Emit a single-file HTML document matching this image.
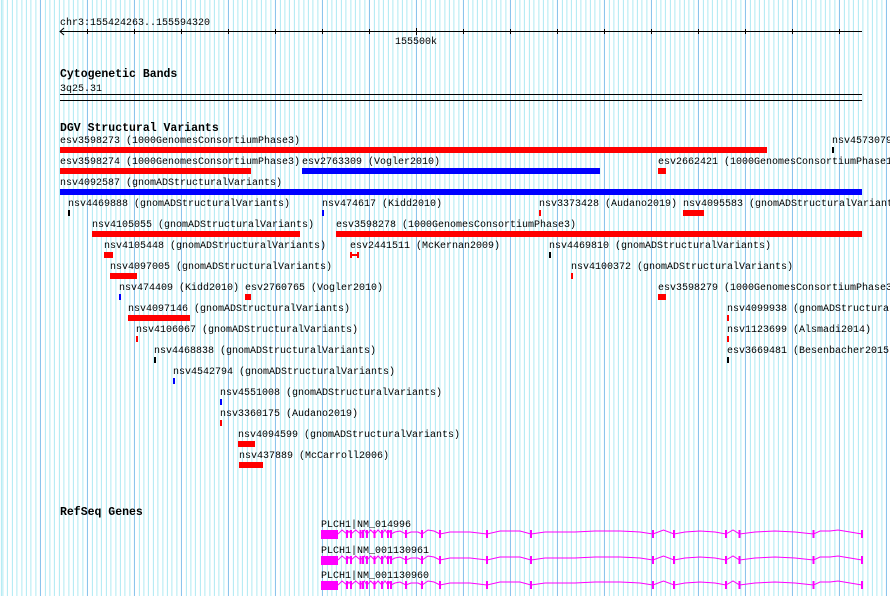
<!DOCTYPE html>
<html><head><meta charset="utf-8"><style>
html,body{margin:0;padding:0}
#p{position:relative;width:890px;height:596px;overflow:hidden;background-color:#fff;
background-image:repeating-linear-gradient(90deg,#8cc4ec 0,#8cc4ec 1px,transparent 1px,transparent 47px),repeating-linear-gradient(90deg,#aeeaf2 0,#aeeaf2 1px,transparent 1px,transparent 4.7px);
background-position:40px 0,2.4px 0;}
.t{position:absolute;font:10px/11px "Liberation Mono",monospace;color:#000;white-space:nowrap;transform:translateY(2px)}
.h{position:absolute;font:bold 11.5px/12px "Liberation Mono",monospace;color:#000;white-space:nowrap;transform:translateY(2px)}
.r{position:absolute;background:#f00;height:6px}
.b{position:absolute;background:#00f;height:6px}
.k{position:absolute;background:#000;height:6px;width:2px}
svg{position:absolute;left:0;top:0}
</style></head><body><div id="p">
<svg width="890" height="596">
<line x1="60" y1="31.5" x2="862" y2="31.5" stroke="#000"/>
<polyline points="64,28 60,31.5 64,35" fill="none" stroke="#000"/>
<g stroke="#000">
<line x1="87.5" y1="29" x2="87.5" y2="34"/><line x1="134.5" y1="29" x2="134.5" y2="34"/><line x1="181.5" y1="29" x2="181.5" y2="34"/><line x1="228.5" y1="29" x2="228.5" y2="34"/><line x1="275.5" y1="29" x2="275.5" y2="34"/><line x1="322.5" y1="29" x2="322.5" y2="34"/><line x1="369.5" y1="29" x2="369.5" y2="34"/><line x1="416.5" y1="28" x2="416.5" y2="35"/><line x1="463.5" y1="29" x2="463.5" y2="34"/><line x1="510.5" y1="29" x2="510.5" y2="34"/><line x1="557.5" y1="29" x2="557.5" y2="34"/><line x1="604.5" y1="29" x2="604.5" y2="34"/><line x1="651.5" y1="29" x2="651.5" y2="34"/><line x1="698.5" y1="29" x2="698.5" y2="34"/><line x1="745.5" y1="29" x2="745.5" y2="34"/><line x1="792.5" y1="29" x2="792.5" y2="34"/><line x1="839.5" y1="29" x2="839.5" y2="34"/>
<line x1="60" y1="94.5" x2="862" y2="94.5"/><line x1="60" y1="100.5" x2="862" y2="100.5"/>
</g>
<g id="g1" fill="#f0f" stroke="none">
<rect x="321" y="530" width="17" height="9"/>
<rect x="346" y="530" width="2" height="8"/><rect x="350" y="530" width="2" height="8"/><rect x="359.5" y="530" width="2" height="8"/><rect x="362" y="530" width="2" height="8"/><rect x="366" y="530" width="2" height="8"/><rect x="373.5" y="530" width="2" height="8"/><rect x="381" y="530" width="2" height="8"/><rect x="387" y="530" width="2" height="8"/><rect x="390" y="530" width="2" height="8"/><rect x="405" y="530" width="2" height="8"/><rect x="421" y="530" width="2" height="8"/><rect x="439" y="530" width="2" height="8"/><rect x="486" y="530" width="2" height="8"/><rect x="530" y="530" width="2" height="8"/><rect x="652" y="530" width="2" height="8"/><rect x="673" y="530" width="2" height="8"/><rect x="725" y="530" width="2" height="8"/><rect x="738.5" y="530" width="2" height="8"/><rect x="812.5" y="530" width="2" height="8"/><rect x="861" y="530" width="2" height="8"/>
<polyline fill="none" stroke="#f0f" stroke-width="1" points="338,534 342,530 347,534 349,531 351,534 355.7,530 360.5,534 364.5,530 367,534 370.7,530 374.5,534 378,530 382,534 385,530 388,534 389.5,531 391,534 395,532 400,531 406,534 411,532 418,532 422,534 428,530 434,531 440,534 450,532 470,532 487,534 500,531 520,531 531,534 545,532 575,532 595,531 620,531 640,532 653,534 663.5,530 674,534 685,532 700,531 715,532 726,534 733,530 739.5,534 755,532 775,531 795,532 813.6,534 820,531 830,531 838,530 850,532 862,534"/>
</g>
<use href="#g1" y="26"/>
<use href="#g1" y="51"/>
</svg>
<div class="t" style="left:60px;top:16px">chr3:155424263..155594320</div>
<div class="t" style="left:395px;top:35px">155500k</div>
<div class="h" style="left:60px;top:67px">Cytogenetic Bands</div>
<div class="t" style="left:60px;top:82px">3q25.31</div>
<div class="h" style="left:60px;top:121px">DGV Structural Variants</div>

<div class="t" style="left:60px;top:134px">esv3598273 (1000GenomesConsortiumPhase3)</div>
<div class="r" style="left:60px;top:147px;width:707px"></div>
<div class="t" style="left:832px;top:134px">nsv4573079</div>
<div class="k" style="left:832px;top:147px"></div>

<div class="t" style="left:60px;top:155px">esv3598274 (1000GenomesConsortiumPhase3)</div>
<div class="r" style="left:60px;top:168px;width:191px"></div>
<div class="t" style="left:302px;top:155px">esv2763309 (Vogler2010)</div>
<div class="b" style="left:302px;top:168px;width:298px"></div>
<div class="t" style="left:658px;top:155px">esv2662421 (1000GenomesConsortiumPhase1</div>
<div class="r" style="left:658px;top:168px;width:8px"></div>

<div class="t" style="left:60px;top:176px">nsv4092587 (gnomADStructuralVariants)</div>
<div class="b" style="left:60px;top:189px;width:802px"></div>

<div class="t" style="left:68px;top:197px">nsv4469888 (gnomADStructuralVariants)</div>
<div class="k" style="left:68px;top:210px"></div>
<div class="t" style="left:322px;top:197px">nsv474617 (Kidd2010)</div>
<div class="b" style="left:322px;top:210px;width:2px"></div>
<div class="t" style="left:539px;top:197px">nsv3373428 (Audano2019)</div>
<div class="r" style="left:539px;top:210px;width:2px"></div>
<div class="t" style="left:683px;top:197px">nsv4095583 (gnomADStructuralVariant</div>
<div class="r" style="left:683px;top:210px;width:21px"></div>

<div class="t" style="left:92px;top:218px">nsv4105055 (gnomADStructuralVariants)</div>
<div class="r" style="left:92px;top:231px;width:208px"></div>
<div class="t" style="left:336px;top:218px">esv3598278 (1000GenomesConsortiumPhase3)</div>
<div class="r" style="left:336px;top:231px;width:526px"></div>

<div class="t" style="left:104px;top:239px">nsv4105448 (gnomADStructuralVariants)</div>
<div class="r" style="left:104px;top:252px;width:9px"></div>
<div class="t" style="left:350px;top:239px">esv2441511 (McKernan2009)</div>
<div class="r" style="left:350px;top:254px;width:9px;height:2px"></div>
<div class="r" style="left:350px;top:252px;width:2px"></div>
<div class="r" style="left:357px;top:252px;width:2px"></div>
<div class="t" style="left:549px;top:239px">nsv4469810 (gnomADStructuralVariants)</div>
<div class="k" style="left:549px;top:252px"></div>

<div class="t" style="left:110px;top:260px">nsv4097005 (gnomADStructuralVariants)</div>
<div class="r" style="left:110px;top:273px;width:27px"></div>
<div class="t" style="left:571px;top:260px">nsv4100372 (gnomADStructuralVariants)</div>
<div class="r" style="left:571px;top:273px;width:2px"></div>

<div class="t" style="left:119px;top:281px">nsv474409 (Kidd2010)</div>
<div class="b" style="left:119px;top:294px;width:2px"></div>
<div class="t" style="left:245px;top:281px">esv2760765 (Vogler2010)</div>
<div class="r" style="left:245px;top:294px;width:6px"></div>
<div class="t" style="left:658px;top:281px">esv3598279 (1000GenomesConsortiumPhase3</div>
<div class="r" style="left:658px;top:294px;width:8px"></div>

<div class="t" style="left:128px;top:302px">nsv4097146 (gnomADStructuralVariants)</div>
<div class="r" style="left:128px;top:315px;width:62px"></div>
<div class="t" style="left:727px;top:302px">nsv4099938 (gnomADStructura</div>
<div class="r" style="left:727px;top:315px;width:2px"></div>

<div class="t" style="left:136px;top:323px">nsv4106067 (gnomADStructuralVariants)</div>
<div class="r" style="left:136px;top:336px;width:2px"></div>
<div class="t" style="left:727px;top:323px">nsv1123699 (Alsmadi2014)</div>
<div class="r" style="left:727px;top:336px;width:2px"></div>

<div class="t" style="left:154px;top:344px">nsv4468838 (gnomADStructuralVariants)</div>
<div class="k" style="left:154px;top:357px"></div>
<div class="t" style="left:727px;top:344px">esv3669481 (Besenbacher2015</div>
<div class="k" style="left:727px;top:357px"></div>

<div class="t" style="left:173px;top:365px">nsv4542794 (gnomADStructuralVariants)</div>
<div class="b" style="left:173px;top:378px;width:2px"></div>

<div class="t" style="left:220px;top:386px">nsv4551008 (gnomADStructuralVariants)</div>
<div class="b" style="left:220px;top:399px;width:2px"></div>

<div class="t" style="left:220px;top:407px">nsv3360175 (Audano2019)</div>
<div class="r" style="left:220px;top:420px;width:2px"></div>

<div class="t" style="left:238px;top:428px">nsv4094599 (gnomADStructuralVariants)</div>
<div class="r" style="left:238px;top:441px;width:17px"></div>

<div class="t" style="left:239px;top:449px">nsv437889 (McCarroll2006)</div>
<div class="r" style="left:239px;top:462px;width:24px"></div>

<div class="h" style="left:60px;top:505px">RefSeq Genes</div>
<div class="t" style="left:321px;top:518px">PLCH1|NM_014996</div>
<div class="t" style="left:321px;top:544px">PLCH1|NM_001130961</div>
<div class="t" style="left:321px;top:569px">PLCH1|NM_001130960</div>
</div></body></html>
